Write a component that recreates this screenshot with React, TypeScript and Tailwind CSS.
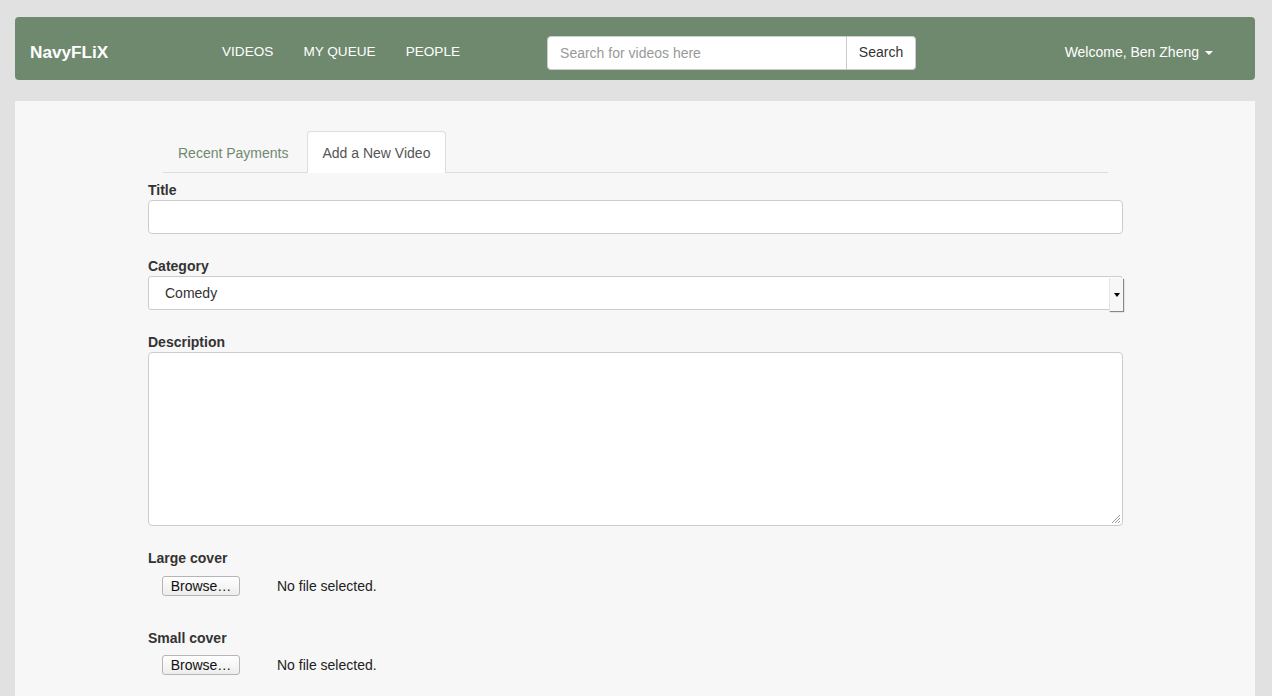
import React from 'react';

const font = { fontFamily: '"Liberation Sans", Arial, Helvetica, sans-serif' };

const NavBar = () => (
  <div className="ml-[15px] mr-[17px] flex h-[63px] items-center rounded-[4px] bg-[#6f896f] pt-[8px] text-white">
    <div className="w-[207px] pl-[15px] text-[17.2px] font-bold">NavyFLiX</div>
    <div className="flex items-center gap-[30px] text-[13.6px]">
      <span>VIDEOS</span>
      <span>MY QUEUE</span>
      <span>PEOPLE</span>
    </div>
    <div className="ml-[87px] flex items-center">
      <input
        className="h-[34px] w-[300px] rounded-l-[4px] border border-[#ccc] bg-white px-[12px] text-[14px] text-[#555] outline-none placeholder:text-[#999]"
        placeholder="Search for videos here"
        style={font}
      />
      <button className="h-[34px] w-[69px] rounded-r-[4px] border border-l-0 border-[#ccc] bg-white text-[14px] text-[#333]">
        Search
      </button>
    </div>
    <div className="ml-auto mr-[42px] flex items-center text-[14px]">
      <span>Welcome, Ben Zheng</span>
      <span className="ml-[6px] inline-block border-x-[4px] border-t-[4px] border-x-transparent border-t-white" />
    </div>
  </div>
);

const Label = ({ children }: { children: React.ReactNode }) => (
  <div className="h-[20px] text-[14px] font-bold leading-[20px] text-[#333]">{children}</div>
);

const FileRow = () => (
  <div className="flex h-[20px] items-center pl-[14px]">
    <button className="h-[20px] w-[78px] rounded-[3px] border border-[#b5b5b5] bg-gradient-to-b from-white to-[#ededed] text-[14px] leading-[18px] text-[#111]">
      Browse…
    </button>
    <span className="ml-[37px] text-[14px] text-[#222]">No file selected.</span>
  </div>
);

const App = () => {
  return (
    <div className="min-h-[696px] bg-[#e1e1e1] pt-[17px]" style={font}>
      <NavBar />
      <div className="ml-[15px] mr-[17px] mt-[21px] min-h-[595px] bg-[#f7f7f7] pl-[133px] pt-[30px]">
        <div className="w-[975px]">
          <div className="mx-[15px] flex h-[42px] border-b border-[#ddd]">
            <div className="flex h-[42px] items-center px-[15px] pt-[2px] text-[14px] text-[#6f896f]">
              Recent Payments
            </div>
            <div className="ml-[3px] flex h-[42px] items-center rounded-t-[4px] border border-b-0 border-[#ddd] bg-white px-[15px] pt-[2px] text-[14px] text-[#555]">
              Add a New Video
            </div>
          </div>

          <div className="mt-[7px]">
            <Label>Title</Label>
            <input className="block h-[34px] w-full rounded-[4px] border border-[#ccc] bg-white px-[12px] text-[14px] outline-none" />
          </div>

          <div className="mt-[22px]">
            <Label>Category</Label>
            <div className="relative flex h-[34px] w-full items-center rounded-[3px] border border-[#ccc] bg-white pl-[16px] text-[14px] text-[#333]">
              Comedy
              <div className="absolute right-[-1px] top-[1px] flex h-[33px] w-[14px] items-center justify-center border-l border-[#e4e4e4] bg-[#f7f7f7] shadow-[1px_1px_1px_#888]">
                <span className="inline-block border-x-[3px] border-t-[4px] border-x-transparent border-t-black" />
              </div>
            </div>
          </div>

          <div className="mt-[22px]">
            <Label>Description</Label>
            <div className="relative h-[174px] w-full rounded-[4px] border border-[#ccc] bg-white">
              <svg className="absolute bottom-[1px] right-[1px]" width="12" height="12" viewBox="0 0 12 12">
                <path d="M11 3 L3 11 M11 6 L6 11 M11 9 L9 11" stroke="#999" strokeWidth="1" fill="none" />
              </svg>
            </div>
          </div>

          <div className="mt-[22px]">
            <Label>Large cover</Label>
            <div className="mt-[8px]">
              <FileRow />
            </div>
          </div>

          <div className="mt-[32px]">
            <Label>Small cover</Label>
            <div className="mt-[7px]">
              <FileRow />
            </div>
          </div>
        </div>
      </div>
    </div>
  );
};

export default App;
